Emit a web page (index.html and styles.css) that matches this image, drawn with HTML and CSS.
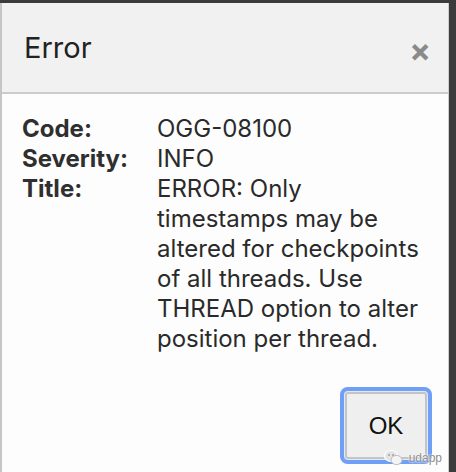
FILE: index.html
```html
<!DOCTYPE html>
<html lang="en">
<head>
    <meta charset="UTF-8">
    <meta name="viewport" content="width=device-width, initial-scale=1.0">
    <title>Error</title>
    <link rel="stylesheet" href="styles.css">
</head>
<body>
    <div class="dialog">
        <div class="dialog-header">
            <h2 class="dialog-title">Error</h2>
            <span class="close-btn">&times;</span>
        </div>

        <div class="dialog-body">
            <div class="details">
                <span class="label">Code:</span>
                <span class="value">OGG-08100</span>
                <span class="label">Severity:</span>
                <span class="value">INFO</span>
                <span class="label">Title:</span>
                <span class="value">ERROR: Only timestamps may be altered for checkpoints of all threads. Use THREAD option to alter position per thread.</span>
            </div>
        </div>

        <div class="dialog-footer">
            <button class="ok-btn">OK</button>
            <div class="watermark">
                <svg width="19" height="17" viewBox="0 0 19 17">
                    <ellipse cx="7" cy="7" rx="6.5" ry="5.5" fill="#e4e4e4" stroke="#fff" stroke-width="1.2"/>
                    <ellipse cx="12.5" cy="11" rx="5.5" ry="4.6" fill="#f4f4f4" stroke="#bbb" stroke-width="1"/>
                    <circle cx="5" cy="6" r="0.9" fill="#999"/>
                    <circle cx="9" cy="6" r="0.9" fill="#999"/>
                </svg>
                <span>udapp</span>
            </div>
        </div>
    </div>
</body>
</html>
```

FILE: styles.css
```css
body {
    margin: 0;
    background-color: #3b3b3b;
    font-family: Inter, "Noto Sans", sans-serif;
    color: #2a2a2a;
    overflow: hidden;
}
.dialog {
    margin-top: 3px;
    width: 446px;
    min-height: 480px;
    background: #fdfdfd;
    border-left: 2px solid #c6c6c6;
    border-right: 1px solid #cfcfcf;
}
.dialog-header {
    display: flex;
    align-items: center;
    justify-content: space-between;
    height: 91px;
    padding: 0 22px;
    background: #f1f1f1;
    border-bottom: 2px solid #cccccc;
    box-sizing: border-box;
}
.dialog-title {
    margin: 0;
    font-size: 29px;
    font-weight: 400;
    color: #222;
}
.close-btn {
    font-size: 32px;
    font-weight: 700;
    color: #8a8a8a;
    margin: 6px -5px 0 0;
}
.dialog-body {
    padding: 20px 22px 0 20px;
}
.details {
    display: grid;
    grid-template-columns: 135px 1fr;
    font-size: 24px;
    line-height: 30px;
}
.label {
    font-weight: 700;
    color: #2f2f2f;
}
.dialog-footer {
    position: relative;
    display: flex;
    justify-content: flex-end;
    padding: 38px 21px 0 0;
}
.ok-btn {
    width: 82px;
    height: 67px;
    background: #efefef;
    border: 2px solid #c4c4c4;
    border-radius: 3px;
    box-shadow: 0 0 0 1px #dfe9fb, 0 0 0 5px #6f9ff7;
    font-family: "Liberation Sans", Arial, sans-serif;
    font-size: 24px;
    color: #111;
}
.watermark {
    position: absolute;
    right: 6px;
    top: 95px;
    display: flex;
    align-items: center;
    gap: 6px;
    font-family: "Liberation Sans", Arial, sans-serif;
    font-size: 12px;
    color: #8d8d8d;
    text-shadow: 0 0 2px #fff, 0 0 2px #fff;
}
```
